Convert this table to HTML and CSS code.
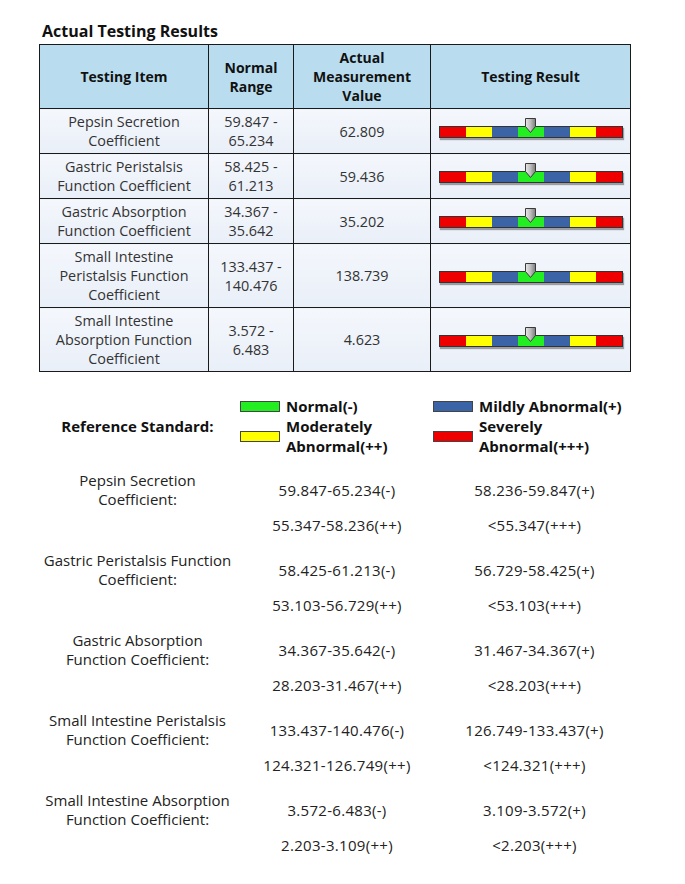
FILE: index.html
```html
<!DOCTYPE html>
<html>
<head>
<meta charset="utf-8">
<link rel="stylesheet" href="styles.css">
</head>
<body>
<div class="page">
  <h1 class="title">Actual Testing Results</h1>
  <table class="results">
    <colgroup>
      <col class="c1"><col class="c2"><col class="c3"><col class="c4">
    </colgroup>
    <thead>
      <tr class="head">
        <th>Testing Item</th>
        <th>Normal<br>Range</th>
        <th>Actual<br>Measurement<br>Value</th>
        <th>Testing Result</th>
      </tr>
    </thead>
    <tbody>
      <tr class="r2">
        <td>Pepsin Secretion<br>Coefficient</td>
        <td>59.847 -<br>65.234</td>
        <td>62.809</td>
        <td><div class="gauge"><div class="bar"><span class="s red"></span><span class="s yel"></span><span class="s blu"></span><span class="s grn"></span><span class="s blu"></span><span class="s yel"></span><span class="s red"></span></div><svg class="marker" width="13" height="17" viewBox="0 0 13 17"><defs><linearGradient id="mg" x1="0" x2="1" y1="0" y2="0"><stop offset="0" stop-color="#e8e8e8"/><stop offset="0.5" stop-color="#bdbdbd"/><stop offset="1" stop-color="#7a7a7a"/></linearGradient></defs><path d="M1.5 1.5 H11.5 V9.5 L6.5 15.5 L1.5 9.5 Z" fill="url(#mg)" stroke="#3a3a3a" stroke-width="1"/></svg></div></td>
      </tr>
      <tr class="r2">
        <td>Gastric Peristalsis<br>Function Coefficient</td>
        <td>58.425 -<br>61.213</td>
        <td>59.436</td>
        <td><div class="gauge"><div class="bar"><span class="s red"></span><span class="s yel"></span><span class="s blu"></span><span class="s grn"></span><span class="s blu"></span><span class="s yel"></span><span class="s red"></span></div><svg class="marker" width="13" height="17" viewBox="0 0 13 17"><path d="M1.5 1.5 H11.5 V9.5 L6.5 15.5 L1.5 9.5 Z" fill="url(#mg)" stroke="#3a3a3a" stroke-width="1"/></svg></div></td>
      </tr>
      <tr class="r2">
        <td>Gastric Absorption<br>Function Coefficient</td>
        <td>34.367 -<br>35.642</td>
        <td>35.202</td>
        <td><div class="gauge"><div class="bar"><span class="s red"></span><span class="s yel"></span><span class="s blu"></span><span class="s grn"></span><span class="s blu"></span><span class="s yel"></span><span class="s red"></span></div><svg class="marker" width="13" height="17" viewBox="0 0 13 17"><path d="M1.5 1.5 H11.5 V9.5 L6.5 15.5 L1.5 9.5 Z" fill="url(#mg)" stroke="#3a3a3a" stroke-width="1"/></svg></div></td>
      </tr>
      <tr class="r3">
        <td>Small Intestine<br>Peristalsis Function<br>Coefficient</td>
        <td>133.437 -<br>140.476</td>
        <td>138.739</td>
        <td><div class="gauge"><div class="bar"><span class="s red"></span><span class="s yel"></span><span class="s blu"></span><span class="s grn"></span><span class="s blu"></span><span class="s yel"></span><span class="s red"></span></div><svg class="marker" width="13" height="17" viewBox="0 0 13 17"><path d="M1.5 1.5 H11.5 V9.5 L6.5 15.5 L1.5 9.5 Z" fill="url(#mg)" stroke="#3a3a3a" stroke-width="1"/></svg></div></td>
      </tr>
      <tr class="r3">
        <td>Small Intestine<br>Absorption Function<br>Coefficient</td>
        <td>3.572 -<br>6.483</td>
        <td>4.623</td>
        <td><div class="gauge"><div class="bar"><span class="s red"></span><span class="s yel"></span><span class="s blu"></span><span class="s grn"></span><span class="s blu"></span><span class="s yel"></span><span class="s red"></span></div><svg class="marker" width="13" height="17" viewBox="0 0 13 17"><path d="M1.5 1.5 H11.5 V9.5 L6.5 15.5 L1.5 9.5 Z" fill="url(#mg)" stroke="#3a3a3a" stroke-width="1"/></svg></div></td>
      </tr>
    </tbody>
  </table>

  <div class="legend">
    <div class="legend-title">Reference Standard:</div>
    <div class="legend-item"><span class="sw grn"></span><span>Normal(-)</span></div>
    <div class="legend-item"><span class="sw blu"></span><span>Mildly Abnormal(+)</span></div>
    <div class="legend-item"><span class="sw yel"></span><span>Moderately<br>Abnormal(++)</span></div>
    <div class="legend-item"><span class="sw red"></span><span>Severely<br>Abnormal(+++)</span></div>
  </div>

  <div class="refs">
    <div class="ref">
      <div class="ref-label">Pepsin Secretion<br>Coefficient:</div>
      <div class="v1">59.847-65.234(-)</div>
      <div class="v2">58.236-59.847(+)</div>
      <div class="v3">55.347-58.236(++)</div>
      <div class="v4">&lt;55.347(+++)</div>
    </div>
    <div class="ref">
      <div class="ref-label">Gastric Peristalsis Function<br>Coefficient:</div>
      <div class="v1">58.425-61.213(-)</div>
      <div class="v2">56.729-58.425(+)</div>
      <div class="v3">53.103-56.729(++)</div>
      <div class="v4">&lt;53.103(+++)</div>
    </div>
    <div class="ref">
      <div class="ref-label">Gastric Absorption<br>Function Coefficient:</div>
      <div class="v1">34.367-35.642(-)</div>
      <div class="v2">31.467-34.367(+)</div>
      <div class="v3">28.203-31.467(++)</div>
      <div class="v4">&lt;28.203(+++)</div>
    </div>
    <div class="ref">
      <div class="ref-label">Small Intestine Peristalsis<br>Function Coefficient:</div>
      <div class="v1">133.437-140.476(-)</div>
      <div class="v2">126.749-133.437(+)</div>
      <div class="v3">124.321-126.749(++)</div>
      <div class="v4">&lt;124.321(+++)</div>
    </div>
    <div class="ref">
      <div class="ref-label">Small Intestine Absorption<br>Function Coefficient:</div>
      <div class="v1">3.572-6.483(-)</div>
      <div class="v2">3.109-3.572(+)</div>
      <div class="v3">2.203-3.109(++)</div>
      <div class="v4">&lt;2.203(+++)</div>
    </div>
  </div>
</div>
</body>
</html>
```

FILE: styles.css
```css
html, body {
  margin: 0;
  padding: 0;
  background: #fff;
}
body {
  font-family: "Open Sans", "Noto Sans", "Liberation Sans", sans-serif;
  font-size: 14.4px;
  color: #222;
}
.page {
  padding: 20px 0 0 39px;
}
.title {
  margin: 0 0 2px 3px;
  font-size: 16px;
  line-height: 22px;
  font-weight: 700;
  color: #111;
}
.results {
  border-collapse: collapse;
  width: 591px;
  table-layout: fixed;
}
.c1 { width: 169px; }
.c2 { width: 85px; }
.c3 { width: 137px; }
.c4 { width: 200px; }
.results th, .results td {
  border: 1px solid #1a1a1a;
  text-align: center;
  vertical-align: middle;
  padding: 0;
  line-height: 19px;
}
.results th {
  background: #b9ddef;
  font-weight: 700;
  font-size: 14px;
  color: #111;
  height: 63px;
}
.results td {
  background: linear-gradient(#f4f7fc, #e9eff8);
  color: #333;
}
.r2 td { height: 44px; }
.r3 td { height: 63px; }
.gauge {
  position: relative;
  width: 184px;
  height: 14px;
  margin: 4px auto 0;
}
.bar {
  display: flex;
  height: 10px;
  border: 1px solid #333;
  box-shadow: 1px 2px 1px rgba(0,0,0,0.35);
}
.s { flex: 1; }
.red { background: #ee0000; }
.yel { background: #ffff00; }
.blu { background: #3a64a6; }
.grn { background: #22ee22; }
.marker {
  position: absolute;
  left: 85px;
  top: -9px;
}
.legend {
  display: grid;
  grid-template-columns: 201px 193px auto;
  grid-template-rows: 20px 40px;
  margin-top: 24px;
  font-weight: 700;
  font-size: 15px;
  color: #111;
  line-height: 20px;
}
.legend-title {
  grid-row: 1 / 3;
  align-self: center;
  text-align: center;
  width: 197px;
}
.legend-item {
  display: flex;
  align-items: center;
  gap: 6px;
}
.sw {
  width: 38px;
  height: 9px;
  border: 1px solid #444;
  flex: none;
}
.refs {
  margin-top: 14px;
}
.ref {
  display: grid;
  grid-template-columns: 197px 202px 193px;
  grid-template-rows: 40px 20px;
  row-gap: 5px;
  padding-bottom: 15px;
  text-align: center;
  line-height: 20px;
  color: #222;
}
.ref-label {
  grid-row: 1;
  grid-column: 1;
  font-size: 15px;
  line-height: 19px;
  align-self: center;
}
.v1, .v2, .v3, .v4 {
  font-size: 15px;
  letter-spacing: 0.3px;
}
.v1, .v2 {
  grid-row: 1;
  align-self: center;
}
.v1 { grid-column: 2; }
.v2 { grid-column: 3; }
.v3 { grid-row: 2; grid-column: 2; }
.v4 { grid-row: 2; grid-column: 3; }
```
